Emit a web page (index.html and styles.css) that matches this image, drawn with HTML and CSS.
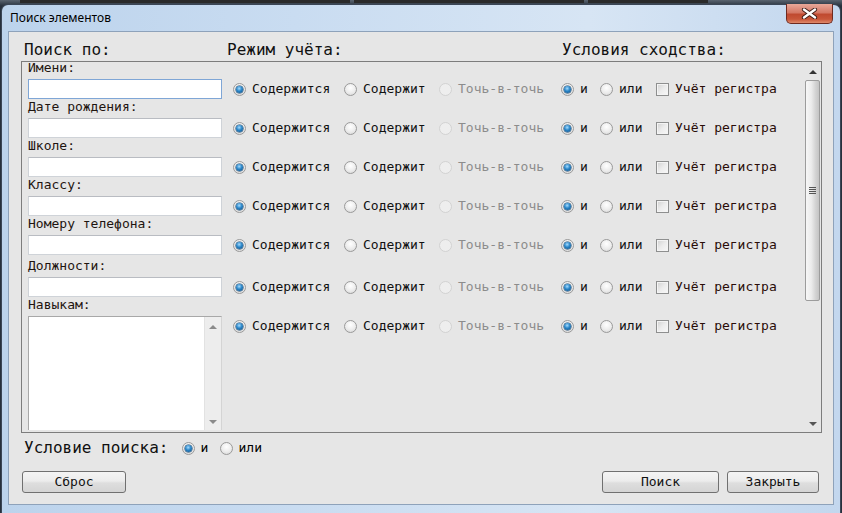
FILE: index.html
```html
<!DOCTYPE html>
<html lang="ru">
<head>
<meta charset="utf-8">
<title>Поиск элементов</title>
<link rel="stylesheet" href="styles.css">
</head>
<body>
<div class="desk">
  <div class="behind"><span class="seg s1"></span><span class="seg s2"></span><span class="seg s3"></span></div>
  <div class="window">
    <div class="titlebar">
      <span class="title">Поиск элементов</span>
      <div class="close">
        <svg width="17" height="11" viewBox="0 0 17 11">
          <path d="M3 1.5 L14 9.5 M14 1.5 L3 9.5" stroke="#3a1a14" stroke-width="4.2" stroke-linecap="round" fill="none"/>
          <path d="M3 1.5 L14 9.5 M14 1.5 L3 9.5" stroke="#ffffff" stroke-width="2.4" stroke-linecap="round" fill="none"/>
        </svg>
      </div>
    </div>
    <div class="client">
      <div class="heads">
        <div class="head h1">Поиск по:</div>
        <div class="head h2">Режим учёта:</div>
        <div class="head">Условия сходства:</div>
      </div>
      <div class="panel">
        <div class="rows">
          <div class="row">
            <div class="label">Имени:</div>
            <div class="input focus"></div>
            <div class="opts">
              <div class="opt o1"><span class="rb on"></span>Содержится</div>
              <div class="opt o2"><span class="rb"></span>Содержит</div>
              <div class="opt o3 disabled"><span class="rb dis"></span>Точь-в-точь</div>
              <div class="opt o4"><span class="rb on"></span>и</div>
              <div class="opt o5"><span class="rb"></span>или</div>
              <div class="opt chk"><span class="cb"></span>Учёт регистра</div>
            </div>
          </div>
          <div class="row">
            <div class="label">Дате рождения:</div>
            <div class="input"></div>
            <div class="opts">
              <div class="opt o1"><span class="rb on"></span>Содержится</div>
              <div class="opt o2"><span class="rb"></span>Содержит</div>
              <div class="opt o3 disabled"><span class="rb dis"></span>Точь-в-точь</div>
              <div class="opt o4"><span class="rb on"></span>и</div>
              <div class="opt o5"><span class="rb"></span>или</div>
              <div class="opt chk"><span class="cb"></span>Учёт регистра</div>
            </div>
          </div>
          <div class="row">
            <div class="label">Школе:</div>
            <div class="input"></div>
            <div class="opts">
              <div class="opt o1"><span class="rb on"></span>Содержится</div>
              <div class="opt o2"><span class="rb"></span>Содержит</div>
              <div class="opt o3 disabled"><span class="rb dis"></span>Точь-в-точь</div>
              <div class="opt o4"><span class="rb on"></span>и</div>
              <div class="opt o5"><span class="rb"></span>или</div>
              <div class="opt chk"><span class="cb"></span>Учёт регистра</div>
            </div>
          </div>
          <div class="row">
            <div class="label">Классу:</div>
            <div class="input"></div>
            <div class="opts">
              <div class="opt o1"><span class="rb on"></span>Содержится</div>
              <div class="opt o2"><span class="rb"></span>Содержит</div>
              <div class="opt o3 disabled"><span class="rb dis"></span>Точь-в-точь</div>
              <div class="opt o4"><span class="rb on"></span>и</div>
              <div class="opt o5"><span class="rb"></span>или</div>
              <div class="opt chk"><span class="cb"></span>Учёт регистра</div>
            </div>
          </div>
          <div class="row">
            <div class="label">Номеру телефона:</div>
            <div class="input"></div>
            <div class="opts">
              <div class="opt o1"><span class="rb on"></span>Содержится</div>
              <div class="opt o2"><span class="rb"></span>Содержит</div>
              <div class="opt o3 disabled"><span class="rb dis"></span>Точь-в-точь</div>
              <div class="opt o4"><span class="rb on"></span>и</div>
              <div class="opt o5"><span class="rb"></span>или</div>
              <div class="opt chk"><span class="cb"></span>Учёт регистра</div>
            </div>
          </div>
          <div class="row row-wide">
            <div class="label">Должности:</div>
            <div class="input"></div>
            <div class="opts">
              <div class="opt o1"><span class="rb on"></span>Содержится</div>
              <div class="opt o2"><span class="rb"></span>Содержит</div>
              <div class="opt o3 disabled"><span class="rb dis"></span>Точь-в-точь</div>
              <div class="opt o4"><span class="rb on"></span>и</div>
              <div class="opt o5"><span class="rb"></span>или</div>
              <div class="opt chk"><span class="cb"></span>Учёт регистра</div>
            </div>
          </div>
          <div class="row row-last">
            <div class="label">Навыкам:</div>
            <div class="textarea">
              <div class="ta-bar">
                <span class="arr up"></span>
                <span class="arr down"></span>
              </div>
            </div>
            <div class="opts">
              <div class="opt o1"><span class="rb on"></span>Содержится</div>
              <div class="opt o2"><span class="rb"></span>Содержит</div>
              <div class="opt o3 disabled"><span class="rb dis"></span>Точь-в-точь</div>
              <div class="opt o4"><span class="rb on"></span>и</div>
              <div class="opt o5"><span class="rb"></span>или</div>
              <div class="opt chk"><span class="cb"></span>Учёт регистра</div>
            </div>
          </div>
        </div>
        <div class="vbar">
          <span class="arr up dark"></span>
          <div class="thumb"><span class="grip"></span></div>
          <div class="track-rest"></div>
          <span class="arr down dark"></span>
        </div>
      </div>
      <div class="cond">
        <span class="cond-label">Условие поиска:</span>
        <div class="opt c1"><span class="rb on"></span>и</div>
        <div class="opt"><span class="rb"></span>или</div>
      </div>
      <div class="buttons">
        <button class="btn b-reset">Сброс</button>
        <div class="spacer"></div>
        <button class="btn b-search">Поиск</button>
        <button class="btn b-close">Закрыть</button>
      </div>
    </div>
  </div>
</div>
</body>
</html>
```

FILE: styles.css
```css
* { box-sizing: border-box; }
html, body { margin: 0; padding: 0; }
body { width: 842px; height: 513px; overflow: hidden; background: #1e2430; }

.desk {
  width: 842px;
  height: 513px;
  position: relative;
  background: linear-gradient(#5a6470, #27303c 6px);
}
.behind {
  height: 4px;
  display: flex;
  padding-left: 20px;
  gap: 4px;
}
.seg {
  height: 3px;
  background: #2a2a2a;
}
.seg.s1 { width: 330px; }
.seg.s2 { width: 230px; }
.seg.s3 { width: 120px; }

.window {
  position: absolute;
  left: 1px;
  top: 4px;
  width: 840px;
  height: 509px;
  border: 1px solid #3b4656;
  border-bottom: none;
  border-radius: 7px 7px 0 0;
  background: linear-gradient(90deg, #bcd3ec 0%, #c9dcf1 35%, #d7e5f4 70%, #c3d7ee 100%);
  display: flex;
  flex-direction: column;
}

.titlebar {
  height: 26px;
  display: flex;
  align-items: flex-start;
}
.title {
  font: 12px "Noto Sans", sans-serif;
  color: #000;
  padding: 4px 0 0 8px;
}
.close {
  margin-left: auto;
  margin-right: 7px;
  margin-top: -1px;
  width: 47px;
  height: 20px;
  border: 1px solid #6e2a20;
  border-top: none;
  border-radius: 0 0 5px 5px;
  background: linear-gradient(#e9a899 0%, #d47865 45%, #c04a30 55%, #c8573a 80%, #e08a6c 100%);
  display: flex;
  align-items: center;
  justify-content: center;
}

.client {
  margin: 0 6px 7px 6px;
  height: 474px;
  border: 1px solid #8ea2ba;
  background: #e6e6e6;
  padding: 0 12px 0 12px;
  display: flex;
  flex-direction: column;
}

.heads {
  height: 29px;
  display: flex;
  padding: 8px 0 0 3px;
  font: 16px/20px "DejaVu Sans Mono", monospace;
  color: #111;
}
.head.h1 { width: 203px; }
.head.h2 { width: 335px; }

.panel {
  height: 372px;
  border: 1px solid #7d7d7d;
  display: flex;
  margin-right: -1px;
}
.rows {
  flex: 1;
  padding: 1px 0 0 6px;
}
.row {
  display: grid;
  grid-template-columns: 194px 1fr;
  grid-template-rows: 16px auto;
  column-gap: 11px;
  padding-bottom: 3px;
}
.row-wide { padding-top: 3px; }
.row-last { padding-bottom: 0; }
.label {
  grid-column: 1;
  grid-row: 1;
  margin-top: -3px;
  font: 13px/16px "DejaVu Sans Mono", monospace;
  color: #1f1510;
}
.input {
  grid-column: 1;
  grid-row: 2;
  height: 20px;
  background: #fff;
  border: 1px solid #cfd3d8;
  border-top-color: #b9bcc2;
}
.input.focus { border-color: #7fa6d6; }
.textarea {
  grid-column: 1;
  grid-row: 2;
  height: 114px;
  background: #fff;
  border: 1px solid #a8a8a8;
  border-right-color: #d4d4d4;
  border-bottom: none;
  display: flex;
  justify-content: flex-end;
}
.ta-bar {
  width: 17px;
  background: #ededed;
  border-left: 1px solid #e2e2e2;
  display: flex;
  flex-direction: column;
  justify-content: space-between;
  align-items: center;
  padding: 8px 0 6px 0;
}

.opts {
  grid-column: 2;
  grid-row: 2;
  height: 20px;
  display: flex;
  align-items: center;
  font: 13px/16px "DejaVu Sans Mono", monospace;
  color: #111;
}
.opt {
  display: flex;
  align-items: center;
  white-space: nowrap;
  font: 13px/16px "DejaVu Sans Mono", monospace;
}
.opt.o1 { width: 111px; }
.opt.o2 { width: 95px; }
.opt.o3 { width: 122px; }
.opt.o4 { width: 39px; }
.opt.o5 { width: 56px; }
.opt.disabled { color: #8c8c8c; }
.opt.chk { color: #2a0d08; }

.rb {
  width: 13px;
  height: 13px;
  flex: none;
  border-radius: 50%;
  border: 1px solid #9a9a9a;
  background: radial-gradient(circle at 50% 35%, #ffffff 0%, #ececec 55%, #d2d2d2 100%);
  margin-right: 6px;
  position: relative;
}
.rb.on::after {
  content: "";
  position: absolute;
  left: 2px;
  top: 2px;
  width: 7px;
  height: 7px;
  border-radius: 50%;
  background: radial-gradient(circle at 45% 35%, #a6dcff 0%, #2a86c8 45%, #0d4a80 100%);
  box-shadow: 0 0 0 0.5px #0e3c64;
}
.rb.dis {
  border-color: #d2d2d2;
  background: #eeeeee;
}
.cb {
  width: 13px;
  height: 13px;
  flex: none;
  border: 1px solid #8e8f8f;
  background: linear-gradient(135deg, #d0d0d0 0%, #ececec 50%, #f8f8f8 100%);
  box-shadow: inset 0 0 0 1px #f4f4f4;
  margin-right: 6px;
}

.vbar {
  width: 17px;
  display: flex;
  flex-direction: column;
  align-items: center;
  padding: 8px 0 6px 0;
}
.thumb {
  width: 15px;
  height: 221px;
  margin-top: 6px;
  border: 1px solid #9c9c9c;
  border-radius: 2px;
  background: linear-gradient(90deg, #f7f7f7 0%, #ececec 40%, #d2d2d2 75%, #c4c4c4 100%);
  display: flex;
  align-items: center;
  justify-content: center;
}
.grip {
  width: 7px;
  height: 8px;
  background: repeating-linear-gradient(#555 0 1px, transparent 1px 2px);
}
.track-rest { flex: 1; }

.arr {
  width: 0;
  height: 0;
  border-left: 4px solid transparent;
  border-right: 4px solid transparent;
}
.arr.up { border-bottom: 4px solid #8a8a8a; }
.arr.down { border-top: 4px solid #8a8a8a; }
.arr.dark.up { border-bottom-color: #333; }
.arr.dark.down { border-top-color: #555; }

.cond {
  height: 30px;
  display: flex;
  align-items: center;
  padding: 0 0 0 3px;
}
.cond-label {
  font: 16px/20px "DejaVu Sans Mono", monospace;
  color: #111;
  margin-right: 13px;
}
.opt.c1 { width: 38px; }

.buttons {
  display: flex;
  padding-top: 8px;
  margin-right: 2px;
}
.spacer { flex: 1; }
.btn {
  height: 22px;
  border: 1px solid #707070;
  border-radius: 3px;
  background: linear-gradient(#f4f4f4 0%, #ececec 45%, #dedede 55%, #d4d4d4 100%);
  font: 13px/18px "DejaVu Sans Mono", monospace;
  color: #111;
  padding: 0;
  margin: 0;
}
.b-reset { width: 104px; margin-left: 1px; }
.b-search { width: 117px; }
.b-close { width: 92px; margin-left: 8px; }
```
